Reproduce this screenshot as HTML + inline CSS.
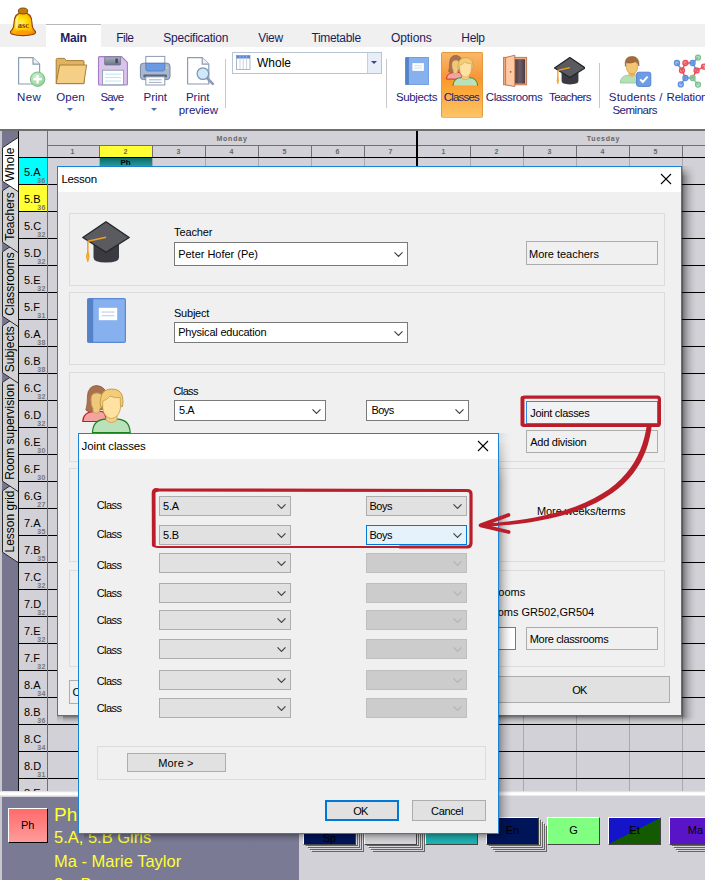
<!DOCTYPE html>
<html><head><meta charset="utf-8"><title>Joint classes</title>
<style>
html,body{margin:0;padding:0;}
body{width:705px;height:880px;overflow:hidden;position:relative;background:#fff;font-family:"Liberation Sans",sans-serif;font-size:11px;color:#000;}
.a{position:absolute;}
.t{position:absolute;white-space:nowrap;line-height:1;}
#tabbar{left:0;top:24px;width:705px;height:23px;background:#f0f0f0;}
#maintab{left:46px;top:24px;width:55px;height:23px;background:#fff;border-top:1px solid #b8b8b8;box-sizing:border-box;}
.rt{font-size:12px;color:#1e1e5a;top:31px;}
.rl{font-size:12px;color:#1e1e6e;text-align:center;line-height:13px;transform:translateX(-50%);}
.sep{width:1px;background:#c8c8c8;}
#grid{left:0;top:131px;width:705px;height:660px;background:#d1d1d7;overflow:hidden;}
.hl{position:absolute;left:19px;right:0;height:1px;background:#000;}
.vl{position:absolute;top:27px;width:1px;bottom:0;background:#a8a8ae;}
.cl{position:absolute;left:19px;width:28px;height:26px;font-size:11px;}
.cl b{position:absolute;left:5px;top:8.5px;font-weight:normal;line-height:1;}
.cl i{position:absolute;right:1px;bottom:0px;font-style:normal;font-size:7px;font-weight:bold;color:#777;line-height:1;letter-spacing:0.5px;}
.pn{position:absolute;top:17px;font-size:7px;font-weight:bold;color:#666;transform:translateX(-50%);line-height:1;}
.dlg{position:absolute;background:#f0f0f0;border:1px solid #1883d7;box-sizing:border-box;}
.ttl{position:absolute;left:0;top:0;right:0;background:#fff;}
.gb{position:absolute;border:1px solid #dcdcdc;box-sizing:border-box;}
.cb{position:absolute;background:#fff;border:1px solid #7a7a7a;box-sizing:border-box;}
.cb.g{background:#e1e1e1;border-color:#adadad;}
.cb.d{background:#cccccc;border-color:#bfbfbf;}
.cb span{position:absolute;left:4px;top:50%;transform:translateY(-50%);line-height:1;white-space:nowrap;}
.cb svg{position:absolute;right:4.5px;top:50%;margin-top:-2px;}
.bt{position:absolute;background:#e1e1e1;border:1px solid #adadad;box-sizing:border-box;}
.bt span{position:absolute;left:3px;top:50%;transform:translateY(-50%);line-height:1;white-space:nowrap;}
.bt.c span{left:50%;transform:translate(-50%,-50%);}
</style></head><body>
<div class="a" id="tabbar"></div><div class="a" id="maintab"></div>
<span class="t" style="left:60.2px;top:31.8px;font-size:12px;letter-spacing:-0.24px;color:#1c1c5c;font-weight:bold;">Main</span><span class="t" style="left:116.3px;top:31.8px;font-size:12px;letter-spacing:-0.55px;color:#1c1c5c;">File</span><span class="t" style="left:163.3px;top:31.8px;font-size:12px;letter-spacing:-0.25px;color:#1c1c5c;">Specification</span><span class="t" style="left:258.3px;top:31.8px;font-size:12px;letter-spacing:-0.34px;color:#1c1c5c;">View</span><span class="t" style="left:311.4px;top:31.8px;font-size:12px;letter-spacing:-0.32px;color:#1c1c5c;">Timetable</span><span class="t" style="left:391.0px;top:31.8px;font-size:12px;letter-spacing:-0.09px;color:#1c1c5c;">Options</span><span class="t" style="left:461.3px;top:31.8px;font-size:12px;letter-spacing:-0.31px;color:#1c1c5c;">Help</span><div class="a" style="left:441px;top:52px;width:42px;height:66px;background:linear-gradient(#f9b769,#f79434 41%,#fb9a28 42%,#fcc566);border:1px solid #e39a3c;border-bottom-color:#ffb833;box-sizing:border-box;border-radius:2px;"></div>
<span class="t" style="left:17.0px;top:91.5px;font-size:11.5px;letter-spacing:0.40px;color:#1c1c78;">New</span><span class="t" style="left:56.2px;top:91.5px;font-size:11.5px;letter-spacing:0.13px;color:#1c1c78;">Open</span><span class="t" style="left:100.4px;top:91.5px;font-size:11.5px;letter-spacing:-0.80px;color:#1c1c78;">Save</span><span class="t" style="left:143.5px;top:91.5px;font-size:11.5px;letter-spacing:-0.03px;color:#1c1c78;">Print</span><span class="t" style="left:186.0px;top:91.5px;font-size:11.5px;letter-spacing:-0.05px;color:#1c1c78;">Print</span><span class="t" style="left:178.8px;top:104.5px;font-size:11.5px;letter-spacing:-0.07px;color:#1c1c78;">preview</span><span class="t" style="left:395.9px;top:91.5px;font-size:11.5px;letter-spacing:-0.37px;color:#1c1c78;">Subjects</span><span class="t" style="left:443.7px;top:91.5px;font-size:11.5px;letter-spacing:-0.80px;color:#1c1c78;">Classes</span><span class="t" style="left:485.8px;top:91.5px;font-size:11.5px;letter-spacing:-0.43px;color:#1c1c78;">Classrooms</span><span class="t" style="left:549.1px;top:91.5px;font-size:11.5px;letter-spacing:-0.61px;color:#1c1c78;">Teachers</span><span class="t" style="left:608.8px;top:91.5px;font-size:11.5px;letter-spacing:0.20px;color:#1c1c78;">Students /</span><span class="t" style="left:612.4px;top:104.5px;font-size:11.5px;letter-spacing:-0.49px;color:#1c1c78;">Seminars</span><span class="t" style="left:666.5px;top:91.5px;font-size:11.5px;letter-spacing:-0.17px;color:#1c1c78;">Relations</span><div class="a" style="left:67px;top:108px;width:0;height:0;border-left:3px solid transparent;border-right:3px solid transparent;border-top:3px solid #4a6ab0;"></div>
<div class="a" style="left:109px;top:108px;width:0;height:0;border-left:3px solid transparent;border-right:3px solid transparent;border-top:3px solid #4a6ab0;"></div>
<div class="a" style="left:151px;top:108px;width:0;height:0;border-left:3px solid transparent;border-right:3px solid transparent;border-top:3px solid #4a6ab0;"></div>
<div class="a sep" style="left:225px;top:59px;height:49px;"></div>
<div class="a sep" style="left:386px;top:59px;height:49px;"></div>
<div class="a sep" style="left:599px;top:63px;height:45px;"></div>
<div class="a" style="left:232px;top:52px;width:150px;height:22px;border:1px solid #b8c4d4;box-sizing:border-box;background:#fff;"></div>
<div class="a" style="left:367px;top:53px;width:14px;height:20px;background:#e8eef8;border-left:1px solid #c8d0e0;box-sizing:border-box;"></div>
<div class="a" style="left:371px;top:61px;width:0;height:0;border-left:3px solid transparent;border-right:3px solid transparent;border-top:3px solid #33478a;"></div>
<span class="t" style="left:257px;top:56.5px;font-size:12px;color:#000;">Whole</span>
<svg class="a" style="left:0;top:0;" width="705" height="128" viewBox="0 0 705 128"><defs>
<radialGradient id="bg1" cx="0.42" cy="0.45" r="0.65"><stop offset="0" stop-color="#fff36a"/><stop offset="0.35" stop-color="#ffe000"/><stop offset="0.8" stop-color="#ffa800"/><stop offset="1" stop-color="#e88a00"/></radialGradient>
<radialGradient id="gp" cx="0.4" cy="0.35" r="0.7"><stop offset="0" stop-color="#d6efd6"/><stop offset="1" stop-color="#8ccf92"/></radialGradient>
<linearGradient id="sh" x1="0" y1="0" x2="0" y2="1"><stop offset="0" stop-color="#a8b0c0"/><stop offset="1" stop-color="#6c7688"/></linearGradient>
<linearGradient id="dk" x1="0" y1="0" x2="1" y2="0"><stop offset="0" stop-color="#4a3c44"/><stop offset="0.5" stop-color="#6e5c64"/><stop offset="1" stop-color="#4a3c44"/></linearGradient>
</defs><path d="M23 12.6 C15.6 12.6 14.1 18 14 23 C13.9 27.5 13.4 28.8 11.2 30.6 C9.8 31.9 10.2 33.4 12.4 34.2 C18 36.1 28 36.1 33.6 34.2 C35.8 33.4 36.2 31.9 34.8 30.6 C32.6 28.8 32.1 27.5 32 23 C31.9 18 30.4 12.6 23 12.6 Z" fill="url(#bg1)" stroke="#8e400a" stroke-width="1.1"/>
<path d="M16.6 16.5 C15.6 19 15.8 25 15.4 28.5 L17.4 28.8 C17.6 25 17.4 19.5 18.6 16 Z" fill="#fff" opacity="0.55"/>
<ellipse cx="23" cy="32.4" rx="7" ry="2.3" fill="#ff9408" opacity="0.8"/>
<ellipse cx="23" cy="11" rx="4.7" ry="3" fill="#c27c0c" stroke="#7e420a" stroke-width="0.9"/>
<text x="23.4" y="28.4" text-anchor="middle" font-family="Liberation Serif, serif" font-size="8.5" font-weight="bold" fill="#82400c">asc</text><path d="M18.6 57.6 L33 57.6 L39.6 64.2 L39.6 84 L18.6 84 Z" fill="#fff" stroke="#8c9cb4" stroke-width="1.2" stroke-linejoin="round"/>
<path d="M33 57.6 L33 64.2 L39.6 64.2" fill="#eef2f8" stroke="#8c9cb4" stroke-width="1.2" stroke-linejoin="round"/>
<circle cx="37.6" cy="79.2" r="7.2" fill="url(#gp)" stroke="#7cbc84" stroke-width="1"/>
<path d="M37.6 75 L37.6 83.4 M33.4 79.2 L41.8 79.2" stroke="#fff" stroke-width="2.2"/><path d="M56.2 83.6 L56.2 59.6 Q56.2 58.4 57.4 58.4 L64.6 58.4 L66.4 60.6 L83 60.6 Q84 60.6 84 61.8 L84 83.6 Z" fill="#e0b362" stroke="#a87e36" stroke-width="1"/>
<path d="M59.6 65 L86.6 65 L83.8 83.6 L56.2 83.6 Z" fill="#f6cf86" stroke="#a87e36" stroke-width="1" stroke-linejoin="round"/><path d="M98.5 57.6 Q98.5 56.6 99.5 56.6 L121.6 56.6 L127.4 62.4 L127.4 84 Q127.4 85 126.4 85 L99.5 85 Q98.5 85 98.5 84 Z" fill="#d9c4ec" stroke="#a47cc6" stroke-width="1.1"/>
<rect x="104.6" y="56.8" width="16" height="8.2" rx="1" fill="url(#sh)" stroke="#6a7488" stroke-width="0.7"/>
<rect x="115.4" y="58.6" width="2.4" height="4.6" fill="#3c4658"/>
<rect x="102.6" y="70.2" width="21" height="14.6" fill="#fff" stroke="#8a9ab4" stroke-width="0.9"/>
<path d="M105 74.2 L121.2 74.2 M105 77.6 L121.2 77.6 M105 81 L121.2 81" stroke="#bfe3f4" stroke-width="1"/><rect x="145.8" y="56.4" width="19" height="8" fill="#fff" stroke="#8a9ab4" stroke-width="1"/>
<rect x="140.4" y="63.2" width="29.6" height="16.4" rx="3" fill="#a9b6cb" stroke="#7686a6" stroke-width="1"/>
<path d="M145.8 63.4 L164.8 63.4 L164.8 69 Q164.8 71 162.8 71 L147.8 71 Q145.8 71 145.8 69 Z" fill="#6a9ae4" stroke="#4c7cc8" stroke-width="0.8"/>
<rect x="166" y="66.8" width="1.6" height="1.6" fill="#ffd84a"/>
<rect x="143.4" y="74.4" width="23.6" height="3" rx="1" fill="#56667e"/>
<rect x="145.8" y="76.8" width="19" height="8.2" fill="#fff" stroke="#8a9ab4" stroke-width="1"/>
<path d="M149 79.8 L161.6 79.8 M149 82.4 L161.6 82.4" stroke="#a4aec0" stroke-width="1"/><path d="M187.6 57.6 L202.2 57.6 L208.8 64.2 L208.8 84 L187.6 84 Z" fill="#fff" stroke="#8c9cb4" stroke-width="1.2" stroke-linejoin="round"/>
<path d="M202.2 57.6 L202.2 64.2 L208.8 64.2" fill="#eef2f8" stroke="#8c9cb4" stroke-width="1.2" stroke-linejoin="round"/>
<path d="M207 78 L212.8 83.8" stroke="#8a9ab8" stroke-width="2.6" stroke-linecap="round"/>
<circle cx="202.9" cy="73.6" r="5.8" fill="#cfe8fa" stroke="#7c94b6" stroke-width="1.2"/><rect x="236.5" y="55.5" width="13.5" height="14" fill="#fff" stroke="#9aa6b8" stroke-width="0.8"/>
<rect x="236.5" y="55.5" width="13.5" height="3" fill="#5a86d4"/>
<path d="M240 58.5 L240 69.5 M243.2 58.5 L243.2 69.5 M246.6 58.5 L246.6 69.5" stroke="#b8c0cc" stroke-width="0.7"/>
<path d="M240 55.5 L240 58.5 M243.2 55.5 L243.2 58.5 M246.6 55.5 L246.6 58.5" stroke="#bcd0f0" stroke-width="0.6"/><rect x="503.6" y="57.4" width="23" height="27.4" fill="#f3ad86" stroke="#bf7a52" stroke-width="1"/>
<rect x="514.8" y="59.2" width="10.2" height="24.4" fill="url(#dk)"/>
<path d="M505.6 57.6 L514.8 55.2 L514.8 86.6 L505.6 84.8 Z" fill="#ffc9a4" stroke="#bf7a52" stroke-width="1" stroke-linejoin="round"/>
<circle cx="510.6" cy="71.8" r="0.9" fill="#a05c38"/><path d="M620.2 83 Q620.6 75.6 628 75.2 L636 75.2 Q643 75.6 644 83 Z" fill="#b4e0b6" stroke="#8cc892" stroke-width="0.8"/>
<path d="M628.6 72 L628.6 75.6 Q632 78.4 635.4 75.6 L635.4 72 Z" fill="#e8b868"/>
<ellipse cx="632" cy="67.2" rx="5.6" ry="6.8" fill="#f4c674" stroke="#c89848" stroke-width="0.7"/>
<path d="M625.4 66.4 Q623.8 57 631.4 56.4 Q639.6 56 639 66 Q637.6 62.6 635.6 61.6 Q630 64 626.6 62.6 Q625.6 64 625.4 66.4 Z" fill="#a46c3a" stroke="#845228" stroke-width="0.6"/>
<rect x="636.6" y="72.2" width="14.2" height="14.2" rx="2" fill="#6c9ce6" stroke="#4c7cd0" stroke-width="0.9"/>
<path d="M640.2 79.4 L642.8 82 L647.6 76.6" fill="none" stroke="#fff" stroke-width="2"/><path d="M677 63 L682 70.4" stroke="#5a8ee0" stroke-width="1.4"/><path d="M685.4 63 L692.6 63" stroke="#e8505a" stroke-width="1.4"/><path d="M685.4 63 L682 70.4" stroke="#e8505a" stroke-width="1.4"/><path d="M692.6 63 L696.6 70.4" stroke="#5a8ee0" stroke-width="1.4"/><path d="M692.6 63 L698 57.6" stroke="#5a8ee0" stroke-width="1.4"/><path d="M696.6 70.4 L704 66.6" stroke="#e8505a" stroke-width="1.4"/><path d="M682 70.4 L685.4 78" stroke="#e8505a" stroke-width="1.4"/><path d="M696.6 70.4 L692.6 78" stroke="#e8505a" stroke-width="1.4"/><path d="M685.4 78 L692.6 78" stroke="#5a8ee0" stroke-width="1.4"/><path d="M685.4 78 L680.8 84.4" stroke="#5a8ee0" stroke-width="1.4"/><path d="M692.6 78 L698 84.6" stroke="#7cc48c" stroke-width="1.4"/><circle cx="677" cy="63" r="2.5" fill="#5a8ee0" fill-opacity="0.55" stroke="#5a8ee0" stroke-width="1.3"/><circle cx="685.4" cy="63" r="2.5" fill="#e8505a" fill-opacity="0.55" stroke="#e8505a" stroke-width="1.3"/><circle cx="692.6" cy="63" r="2.5" fill="#5a8ee0" fill-opacity="0.55" stroke="#5a8ee0" stroke-width="1.3"/><circle cx="698" cy="57.6" r="2.5" fill="#7cc48c" fill-opacity="0.55" stroke="#7cc48c" stroke-width="1.3"/><circle cx="682" cy="70.4" r="2.5" fill="#e8505a" fill-opacity="0.55" stroke="#e8505a" stroke-width="1.3"/><circle cx="696.6" cy="70.4" r="2.5" fill="#e8505a" fill-opacity="0.55" stroke="#e8505a" stroke-width="1.3"/><circle cx="704" cy="66.6" r="2.5" fill="#e8505a" fill-opacity="0.55" stroke="#e8505a" stroke-width="1.3"/><circle cx="685.4" cy="78" r="2.5" fill="#5a8ee0" fill-opacity="0.55" stroke="#5a8ee0" stroke-width="1.3"/><circle cx="692.6" cy="78" r="2.5" fill="#7cc48c" fill-opacity="0.55" stroke="#7cc48c" stroke-width="1.3"/><circle cx="680.8" cy="84.4" r="2.5" fill="#5a8ee0" fill-opacity="0.55" stroke="#5a8ee0" stroke-width="1.3"/><circle cx="698" cy="84.6" r="2.5" fill="#7cc48c" fill-opacity="0.55" stroke="#7cc48c" stroke-width="1.3"/></svg>
<svg class="a" style="left:405px;top:56.6px;" width="24.4" height="28.1" viewBox="0 0 39 45"><rect x="0.6" y="0.6" width="37.8" height="43.8" rx="1.5" fill="#86b0ee" stroke="#5a88d2" stroke-width="1.2"/>
<rect x="0.6" y="0.6" width="5.6" height="43.8" fill="#5482c8"/>
<rect x="11.8" y="9.8" width="18.4" height="12.4" fill="#fff"/>
<rect x="14.5" y="13.4" width="13" height="1.3" fill="#c4d6f0"/><rect x="14.5" y="17" width="13" height="1.3" fill="#c4d6f0"/></svg><svg class="a" style="left:446px;top:54.8px;" width="32.3" height="31.7" viewBox="0 0 49 48"><path d="M0.8 36.5 Q1 27 12 26.5 L20 26.5 Q24 28 24 36.5 Z" fill="#f4a2a2" stroke="#c41c1c" stroke-width="1.2"/>
<path d="M14.5 0.5 Q6 1 5.5 11 Q5.5 20 3.8 25 Q7 28.5 12 26 L22 24 L24 6 Q20 0.5 14.5 0.5 Z" fill="#a9714f" stroke="#8a5a3c" stroke-width="0.8"/>
<path d="M9 14 Q9 8 15 8 Q21 8 21 15 Q21 22 17.5 24 L17.5 27 Q14 29.5 11 27 L11 23.5 Q9 21 9 14 Z" fill="#f0c87c" stroke="#c89a50" stroke-width="0.8"/>
<path d="M10.5 47.5 Q11 34.5 24 34.2 L35 34.2 Q47.5 34.5 48.2 47.5 Z" fill="#b9e2ba" stroke="#17821a" stroke-width="1.2"/>
<path d="M24 30 L24 35 Q29.5 40 35 35 L35 30 Z" fill="#f6d088" stroke="#c89a50" stroke-width="0.8"/>
<path d="M29.5 4 Q20 4 18.8 13 Q17.5 17 18.5 21.5 Q20 23 21 20 L38.5 20 Q39.5 23 40.5 21.5 Q41.5 17 40.5 12 Q39 4 29.5 4 Z" fill="#f2cc78" stroke="#c0963c" stroke-width="0.9"/>
<path d="M20.8 16 Q25 15 28 11 Q33 13.5 38.2 12.5 L38.5 22 Q38 30 32 33 Q29.5 34 27 33 Q21 30 20.7 22 Z" fill="#ffe2a2" stroke="#c89a50" stroke-width="0.8"/></svg><svg class="a" style="left:553.8px;top:57px;" width="31.7" height="28.4" viewBox="0 0 48 43"><path d="M11.5 24 L11.5 36.5 Q11.5 41.5 24 41.5 Q37 41.5 37 36.5 L37 24 Z" fill="#3a3a40"/>
<path d="M24 0.8 L47.2 16.5 L24 31.2 L0.8 16.5 Z" fill="#5a5a5f" stroke="#1e262c" stroke-width="1.8" stroke-linejoin="round"/>
<path d="M24 16.2 L5.8 20.2 L5.8 32" fill="none" stroke="#f0a020" stroke-width="2.0" stroke-linejoin="round"/>
<path d="M5.8 30.5 Q8.6 35 5.8 40.8 Q3 35 5.8 30.5 Z" fill="#f6b440" stroke="#e89818" stroke-width="0.8"/></svg><div class="a" style="left:0;top:129px;width:705px;height:2px;background:#6e6e6e;"></div>
<div class="a" id="grid">
<div class="a" style="left:0;top:0;width:2px;height:662px;background:#c8c8cc;"></div><div class="a" style="left:2px;top:0;width:16px;height:662px;background:#76768e;"></div><div class="a" style="left:18px;top:0;width:1px;height:662px;background:#111;"></div><svg class="a" style="left:0;top:0;" width="20" height="660" viewBox="0 131 20 660"><path d="M18 480.5 L2.5 490.8 L2.5 552.2 L18 562.5" fill="#d3d3d6" stroke="#2a2a2a" stroke-width="1"/><text x="0" y="0" transform="translate(14.3 521.5) rotate(-90)" text-anchor="middle" font-family="Liberation Sans, sans-serif" font-size="12" fill="#000">Lesson grid</text><path d="M18 372.0 L2.5 382.3 L2.5 481.2 L18 491.5" fill="#d3d3d6" stroke="#2a2a2a" stroke-width="1"/><text x="0" y="0" transform="translate(14.3 431.75) rotate(-90)" text-anchor="middle" font-family="Liberation Sans, sans-serif" font-size="12" fill="#000">Room supervision</text><path d="M18 315.5 L2.5 325.8 L2.5 372.7 L18 383.0" fill="#d3d3d6" stroke="#2a2a2a" stroke-width="1"/><text x="0" y="0" transform="translate(14.3 349.25) rotate(-90)" text-anchor="middle" font-family="Liberation Sans, sans-serif" font-size="12" fill="#000">Subjects</text><path d="M18 241.5 L2.5 251.8 L2.5 316.2 L18 326.5" fill="#d3d3d6" stroke="#2a2a2a" stroke-width="1"/><text x="0" y="0" transform="translate(14.3 284.0) rotate(-90)" text-anchor="middle" font-family="Liberation Sans, sans-serif" font-size="12" fill="#000">Classrooms</text><path d="M18 180.5 L2.5 190.8 L2.5 242.2 L18 252.5" fill="#d3d3d6" stroke="#2a2a2a" stroke-width="1"/><text x="0" y="0" transform="translate(14.3 216.5) rotate(-90)" text-anchor="middle" font-family="Liberation Sans, sans-serif" font-size="12" fill="#000">Teachers</text><path d="M18 137.5 L2.5 147.8 L2.5 181.2 L18 191.5" fill="#fff" stroke="#2a2a2a" stroke-width="1"/><text x="0" y="0" transform="translate(14.3 164.5) rotate(-90)" text-anchor="middle" font-family="Liberation Sans, sans-serif" font-size="12" fill="#000">Whole</text></svg><div class="a" style="left:47px;top:0;width:1px;height:27px;background:#707070;"></div><div class="a" style="left:48px;top:14px;width:657px;height:1px;background:#707070;"></div><div class="vl" style="left:99px;"></div><div class="a" style="left:99px;top:15px;width:1px;height:11px;background:#707070;"></div><div class="vl" style="left:152px;"></div><div class="a" style="left:152px;top:15px;width:1px;height:11px;background:#707070;"></div><div class="vl" style="left:205px;"></div><div class="a" style="left:205px;top:15px;width:1px;height:11px;background:#707070;"></div><div class="vl" style="left:258px;"></div><div class="a" style="left:258px;top:15px;width:1px;height:11px;background:#707070;"></div><div class="vl" style="left:311px;"></div><div class="a" style="left:311px;top:15px;width:1px;height:11px;background:#707070;"></div><div class="vl" style="left:364px;"></div><div class="a" style="left:364px;top:15px;width:1px;height:11px;background:#707070;"></div><div class="a" style="left:416px;top:0;width:2px;height:662px;background:#000;"></div><div class="vl" style="left:470px;"></div><div class="a" style="left:470px;top:15px;width:1px;height:11px;background:#707070;"></div><div class="vl" style="left:523px;"></div><div class="a" style="left:523px;top:15px;width:1px;height:11px;background:#707070;"></div><div class="vl" style="left:576px;"></div><div class="a" style="left:576px;top:15px;width:1px;height:11px;background:#707070;"></div><div class="vl" style="left:629px;"></div><div class="a" style="left:629px;top:15px;width:1px;height:11px;background:#707070;"></div><div class="vl" style="left:682px;"></div><div class="a" style="left:682px;top:15px;width:1px;height:11px;background:#707070;"></div><div class="a" style="left:100px;top:15px;width:52px;height:11px;background:#ffff33;"></div><div class="a" style="left:100px;top:27px;width:52px;height:9px;background:linear-gradient(#0a6a6a,#2aa0a0);"></div><span class="pn" style="left:125.5px;top:28px;color:#000;font-size:8px;">Ph</span><span class="pn" style="left:72.5px;">1</span><span class="pn" style="left:125.5px;">2</span><span class="pn" style="left:178.5px;">3</span><span class="pn" style="left:231.5px;">4</span><span class="pn" style="left:284.5px;">5</span><span class="pn" style="left:337.5px;">6</span><span class="pn" style="left:390.5px;">7</span><span class="pn" style="left:443.5px;">1</span><span class="pn" style="left:496.5px;">2</span><span class="pn" style="left:549.5px;">3</span><span class="pn" style="left:602.5px;">4</span><span class="pn" style="left:655.5px;">5</span><span class="pn" style="left:232px;top:4px;letter-spacing:0.8px;">Monday</span><span class="pn" style="left:603.5px;top:4px;letter-spacing:0.8px;">Tuesday</span><div class="hl" style="top:26px;"></div><div class="cl" style="top:27px;background:#00ffff;"><b>5.A</b><i>36</i></div><div class="hl" style="top:53px;"></div><div class="cl" style="top:54px;background:#ffff33;"><b>5.B</b><i>36</i></div><div class="hl" style="top:80px;"></div><div class="cl" style="top:81px;"><b>5.C</b><i>32</i></div><div class="hl" style="top:107px;"></div><div class="cl" style="top:108px;"><b>5.D</b><i>32</i></div><div class="hl" style="top:134px;"></div><div class="cl" style="top:135px;"><b>5.E</b><i>32</i></div><div class="hl" style="top:161px;"></div><div class="cl" style="top:162px;"><b>5.F</b><i>31</i></div><div class="hl" style="top:188px;"></div><div class="cl" style="top:189px;"><b>6.A</b><i>38</i></div><div class="hl" style="top:215px;"></div><div class="cl" style="top:216px;"><b>6.B</b><i>38</i></div><div class="hl" style="top:242px;"></div><div class="cl" style="top:243px;"><b>6.C</b><i>32</i></div><div class="hl" style="top:269px;"></div><div class="cl" style="top:270px;"><b>6.D</b><i>32</i></div><div class="hl" style="top:296px;"></div><div class="cl" style="top:297px;"><b>6.E</b><i>30</i></div><div class="hl" style="top:323px;"></div><div class="cl" style="top:324px;"><b>6.F</b><i>30</i></div><div class="hl" style="top:350px;"></div><div class="cl" style="top:351px;"><b>6.G</b><i>27</i></div><div class="hl" style="top:377px;"></div><div class="cl" style="top:378px;"><b>7.A</b><i>35</i></div><div class="hl" style="top:404px;"></div><div class="cl" style="top:405px;"><b>7.B</b><i>35</i></div><div class="hl" style="top:431px;"></div><div class="cl" style="top:432px;"><b>7.C</b><i>32</i></div><div class="hl" style="top:458px;"></div><div class="cl" style="top:459px;"><b>7.D</b><i>32</i></div><div class="hl" style="top:485px;"></div><div class="cl" style="top:486px;"><b>7.E</b><i>32</i></div><div class="hl" style="top:512px;"></div><div class="cl" style="top:513px;"><b>7.F</b><i>32</i></div><div class="hl" style="top:539px;"></div><div class="cl" style="top:540px;"><b>8.A</b><i>34</i></div><div class="hl" style="top:566px;"></div><div class="cl" style="top:567px;"><b>8.B</b><i>36</i></div><div class="hl" style="top:593px;"></div><div class="cl" style="top:594px;"><b>8.C</b><i>34</i></div><div class="hl" style="top:620px;"></div><div class="cl" style="top:621px;"><b>8.D</b><i>31</i></div><div class="hl" style="top:647px;"></div><div class="cl" style="top:648px;"><b>8.E</b><i>30</i></div><div class="hl" style="top:674px;"></div><div class="a" style="left:47px;top:27px;width:1px;height:640px;background:#707070;"></div></div>
<div class="a" style="left:0;top:791px;width:705px;height:6px;background:linear-gradient(#d8d8dc,#fff 30%,#fff 60%,#c8c8cc);"></div><div class="a" style="left:0;top:797px;width:705px;height:83px;background:#d1d1d7;"></div><div class="a" style="left:0;top:797px;width:299px;height:83px;background:#7a7a94;"></div><div class="a" style="left:0;top:797px;width:2px;height:83px;background:#c8c8cc;"></div><div class="a" style="left:8px;top:808px;width:40px;height:35px;background:linear-gradient(#ff6a6a,#ff9c9c);border:1px solid #000;border-top-color:#fff;border-left-color:#fff;box-sizing:border-box;"></div><span class="t" style="left:21px;top:820px;font-size:11px;">Ph</span><span class="t" style="left:54px;top:805px;font-size:19px;color:#ffff33;">Ph</span><span class="t" style="left:54px;top:829px;font-size:16.5px;color:#ffff33;">5.A, 5.B Girls</span><span class="t" style="left:54px;top:853px;font-size:16.5px;color:#ffff33;">Ma - Marie Taylor</span><span class="t" style="left:54px;top:876px;font-size:16.5px;color:#ffff33;">2 x Bm</span><div class="a" style="left:311px;top:825px;width:53px;height:27px;background:#d4d4d8;border:1px solid #666;border-top-color:#fff;border-left-color:#fff;box-sizing:border-box;"></div><div class="a" style="left:309px;top:823px;width:53px;height:27px;background:#d4d4d8;border:1px solid #666;border-top-color:#fff;border-left-color:#fff;box-sizing:border-box;"></div><div class="a" style="left:307px;top:821px;width:53px;height:27px;background:#d4d4d8;border:1px solid #666;border-top-color:#fff;border-left-color:#fff;box-sizing:border-box;"></div><div class="a" style="left:305px;top:819px;width:53px;height:27px;background:#d4d4d8;border:1px solid #666;border-top-color:#fff;border-left-color:#fff;box-sizing:border-box;"></div><div class="a" style="left:303px;top:817px;width:53px;height:28px;background:#00145a;border:1px solid #444;border-top-color:#fff;border-left-color:#fff;box-sizing:border-box;"></div><span class="t" style="left:329.5px;top:833px;transform:translateX(-50%);font-size:11px;color:#000;">Sp</span><div class="a" style="left:372px;top:825px;width:53px;height:27px;background:#d4d4d8;border:1px solid #666;border-top-color:#fff;border-left-color:#fff;box-sizing:border-box;"></div><div class="a" style="left:370px;top:823px;width:53px;height:27px;background:#d4d4d8;border:1px solid #666;border-top-color:#fff;border-left-color:#fff;box-sizing:border-box;"></div><div class="a" style="left:368px;top:821px;width:53px;height:27px;background:#d4d4d8;border:1px solid #666;border-top-color:#fff;border-left-color:#fff;box-sizing:border-box;"></div><div class="a" style="left:366px;top:819px;width:53px;height:27px;background:#d4d4d8;border:1px solid #666;border-top-color:#fff;border-left-color:#fff;box-sizing:border-box;"></div><div class="a" style="left:364px;top:817px;width:53px;height:28px;background:#d4d4d8;border:1px solid #444;border-top-color:#fff;border-left-color:#fff;box-sizing:border-box;"></div><span class="t" style="left:390.5px;top:825px;transform:translateX(-50%);font-size:11px;color:#000;"></span><div class="a" style="left:425px;top:817px;width:53px;height:28px;background:#20b0b0;border:1px solid #444;border-top-color:#fff;border-left-color:#fff;box-sizing:border-box;"></div><span class="t" style="left:451.5px;top:821px;transform:translateX(-50%);font-size:11px;color:#000;">...</span><div class="a" style="left:494px;top:825px;width:53px;height:27px;background:#d4d4d8;border:1px solid #666;border-top-color:#fff;border-left-color:#fff;box-sizing:border-box;"></div><div class="a" style="left:492px;top:823px;width:53px;height:27px;background:#d4d4d8;border:1px solid #666;border-top-color:#fff;border-left-color:#fff;box-sizing:border-box;"></div><div class="a" style="left:490px;top:821px;width:53px;height:27px;background:#d4d4d8;border:1px solid #666;border-top-color:#fff;border-left-color:#fff;box-sizing:border-box;"></div><div class="a" style="left:488px;top:819px;width:53px;height:27px;background:#d4d4d8;border:1px solid #666;border-top-color:#fff;border-left-color:#fff;box-sizing:border-box;"></div><div class="a" style="left:486px;top:817px;width:53px;height:28px;background:#00145a;border:1px solid #444;border-top-color:#fff;border-left-color:#fff;box-sizing:border-box;"></div><span class="t" style="left:512.5px;top:825px;transform:translateX(-50%);font-size:11px;color:#000;">En</span><div class="a" style="left:547px;top:817px;width:53px;height:28px;background:#80ff80;border:1px solid #444;border-top-color:#fff;border-left-color:#fff;box-sizing:border-box;"></div><span class="t" style="left:573.5px;top:825px;transform:translateX(-50%);font-size:11px;color:#000;">G</span><div class="a" style="left:608px;top:817px;width:53px;height:28px;background:linear-gradient(to bottom right,#1414c8 49.5%,#145a00 50.5%);border:1px solid #444;border-top-color:#fff;border-left-color:#fff;box-sizing:border-box;"></div><span class="t" style="left:634.5px;top:825px;transform:translateX(-50%);font-size:11px;color:#000;">Et</span><div class="a" style="left:677px;top:825px;width:53px;height:27px;background:#d4d4d8;border:1px solid #666;border-top-color:#fff;border-left-color:#fff;box-sizing:border-box;"></div><div class="a" style="left:675px;top:823px;width:53px;height:27px;background:#d4d4d8;border:1px solid #666;border-top-color:#fff;border-left-color:#fff;box-sizing:border-box;"></div><div class="a" style="left:673px;top:821px;width:53px;height:27px;background:#d4d4d8;border:1px solid #666;border-top-color:#fff;border-left-color:#fff;box-sizing:border-box;"></div><div class="a" style="left:671px;top:819px;width:53px;height:27px;background:#d4d4d8;border:1px solid #666;border-top-color:#fff;border-left-color:#fff;box-sizing:border-box;"></div><div class="a" style="left:669px;top:817px;width:53px;height:28px;background:#5a14c8;border:1px solid #444;border-top-color:#fff;border-left-color:#fff;box-sizing:border-box;"></div><span class="t" style="left:695.5px;top:825px;transform:translateX(-50%);font-size:11px;color:#000;">Ma</span>
<div class="a" style="left:682px;top:169px;width:14px;height:547px;background:linear-gradient(to right,rgba(0,0,0,0.5) 0,rgba(0,0,0,0.300) 22%,rgba(0,0,0,0.150) 48%,rgba(0,0,0,0.050) 75%,rgba(0,0,0,0) 100%);-webkit-mask-image:linear-gradient(to bottom,rgba(0,0,0,0.35) 0,#000 8px);mask-image:linear-gradient(to bottom,rgba(0,0,0,0.35) 0,#000 8px);"></div><div class="a" style="left:682px;top:166px;width:14px;height:3px;background:linear-gradient(to right,rgba(0,0,0,0.5) 0,rgba(0,0,0,0.300) 22%,rgba(0,0,0,0.150) 48%,rgba(0,0,0,0.050) 75%,rgba(0,0,0,0) 100%);opacity:0.25;"></div><div class="a" style="left:63px;top:716px;width:619px;height:8px;background:linear-gradient(to bottom,rgba(0,0,0,0.5) 0,rgba(0,0,0,0.300) 22%,rgba(0,0,0,0.150) 48%,rgba(0,0,0,0.050) 75%,rgba(0,0,0,0) 100%);"></div><div class="a" style="left:57px;top:716px;width:6px;height:8px;background:linear-gradient(to bottom,rgba(0,0,0,0.5) 0,rgba(0,0,0,0.300) 22%,rgba(0,0,0,0.150) 48%,rgba(0,0,0,0.050) 75%,rgba(0,0,0,0) 100%);opacity:0.5;"></div><div class="a" style="left:682px;top:716px;width:14px;height:8px;background:radial-gradient(ellipse 14px 8px at 0 0,rgba(0,0,0,0.5) 0,rgba(0,0,0,0.300) 22%,rgba(0,0,0,0.150) 48%,rgba(0,0,0,0.050) 75%,rgba(0,0,0,0) 100%);"></div>
<div class="dlg" style="left:57px;top:166px;width:625px;height:550px;"><div class="ttl" style="height:25px;"></div></div>
<span class="t" style="left:61.4px;top:173.9px;font-size:11.5px;letter-spacing:-0.29px;color:#000;">Lesson</span><svg class="a" style="left:660px;top:173px;" width="12" height="12" viewBox="0 0 12 12"><path d="M1 1 L11 11 M11 1 L1 11" stroke="#000" stroke-width="1.1" fill="none"/></svg><div class="gb" style="left:69px;top:213px;width:596px;height:73px;"></div><div class="gb" style="left:69px;top:292px;width:596px;height:73px;"></div><div class="gb" style="left:69px;top:372px;width:596px;height:90px;"></div><div class="gb" style="left:69px;top:468px;width:596px;height:94px;"></div><div class="gb" style="left:69px;top:570px;width:596px;height:97px;"></div><span class="t" style="left:174.1px;top:227.2px;font-size:11px;letter-spacing:-0.13px;color:#000;">Teacher</span><div class="cb " style="left:174px;top:242px;width:234px;height:24px;"><svg width="9" height="5" viewBox="0 0 9 5"><path d="M0.5 0.4 L4.5 4.4 L8.5 0.4" fill="none" stroke="#444" stroke-width="1.2"/></svg></div><span class="t" style="left:178.2px;top:248.7px;font-size:11px;letter-spacing:-0.02px;color:#000;">Peter Hofer (Pe)</span><div class="bt " style="left:526px;top:241px;width:132px;height:24px;background:#f0f0f0;"></div><span class="t" style="left:529.0px;top:249.0px;font-size:11px;letter-spacing:-0.03px;color:#000;">More teachers</span><span class="t" style="left:174.0px;top:307.9px;font-size:11px;letter-spacing:-0.23px;color:#000;">Subject</span><div class="cb " style="left:174px;top:322px;width:234px;height:21px;"><svg width="9" height="5" viewBox="0 0 9 5"><path d="M0.5 0.4 L4.5 4.4 L8.5 0.4" fill="none" stroke="#444" stroke-width="1.2"/></svg></div><span class="t" style="left:178.2px;top:327.3px;font-size:11px;letter-spacing:-0.20px;color:#000;">Physical education</span><span class="t" style="left:173.6px;top:386.0px;font-size:11px;letter-spacing:-0.67px;color:#000;">Class</span><div class="cb " style="left:174px;top:400px;width:152px;height:21px;"><svg width="9" height="5" viewBox="0 0 9 5"><path d="M0.5 0.4 L4.5 4.4 L8.5 0.4" fill="none" stroke="#444" stroke-width="1.2"/></svg></div><span class="t" style="left:179.1px;top:405.4px;font-size:11px;letter-spacing:-0.48px;color:#000;">5.A</span><div class="cb " style="left:366px;top:400px;width:103px;height:21px;"><svg width="9" height="5" viewBox="0 0 9 5"><path d="M0.5 0.4 L4.5 4.4 L8.5 0.4" fill="none" stroke="#444" stroke-width="1.2"/></svg></div><span class="t" style="left:371.5px;top:405.4px;font-size:11px;letter-spacing:-0.59px;color:#000;">Boys</span><div class="bt " style="left:526px;top:401px;width:132px;height:23px;border:1px solid #2b8ce6;background:#f1f2f3;"></div><span class="t" style="left:530.3px;top:407.5px;font-size:11px;letter-spacing:-0.30px;color:#000;">Joint classes</span><div class="bt " style="left:526px;top:430px;width:132px;height:23px;background:#f0f0f0;"></div><span class="t" style="left:530.3px;top:437.0px;font-size:11px;letter-spacing:-0.27px;color:#000;">Add division</span><span class="t" style="left:537.0px;top:505.9px;font-size:11px;letter-spacing:-0.09px;color:#000;">More weeks/terms</span><span class="t" style="left:467.2px;top:587.2px;font-size:11px;letter-spacing:0.00px;color:#000;">Classrooms</span><span class="t" style="left:430.4px;top:607.1px;font-size:11px;letter-spacing:0.00px;color:#000;">Home classrooms GR502,GR504</span><div class="cb" style="left:380px;top:627px;width:136px;height:23px;"></div><div class="bt " style="left:526px;top:627px;width:132px;height:23px;background:#f0f0f0;"></div><span class="t" style="left:529.8px;top:633.6px;font-size:11px;letter-spacing:-0.35px;color:#000;">More classrooms</span><svg class="a" style="left:82px;top:221px;" width="48.0" height="43.0" viewBox="0 0 48 43"><path d="M11.5 24 L11.5 36.5 Q11.5 41.5 24 41.5 Q37 41.5 37 36.5 L37 24 Z" fill="#3a3a40"/>
<path d="M24 0.8 L47.2 16.5 L24 31.2 L0.8 16.5 Z" fill="#5a5a5f" stroke="#1e262c" stroke-width="1.3" stroke-linejoin="round"/>
<path d="M24 16.2 L5.8 20.2 L5.8 32" fill="none" stroke="#f0a020" stroke-width="1.5" stroke-linejoin="round"/>
<path d="M5.8 30.5 Q8.6 35 5.8 40.8 Q3 35 5.8 30.5 Z" fill="#f6b440" stroke="#e89818" stroke-width="0.8"/></svg><svg class="a" style="left:87px;top:298px;" width="39.0" height="45.0" viewBox="0 0 39 45"><rect x="0.6" y="0.6" width="37.8" height="43.8" rx="1.5" fill="#86b0ee" stroke="#5a88d2" stroke-width="1.2"/>
<rect x="0.6" y="0.6" width="5.6" height="43.8" fill="#5482c8"/>
<rect x="11.8" y="9.8" width="18.4" height="12.4" fill="#fff"/>
<rect x="14.5" y="13.4" width="13" height="1.3" fill="#c4d6f0"/><rect x="14.5" y="17" width="13" height="1.3" fill="#c4d6f0"/></svg><svg class="a" style="left:82px;top:385px;" width="49.0" height="48.0" viewBox="0 0 49 48"><path d="M0.8 36.5 Q1 27 12 26.5 L20 26.5 Q24 28 24 36.5 Z" fill="#f4a2a2" stroke="#c41c1c" stroke-width="1.2"/>
<path d="M14.5 0.5 Q6 1 5.5 11 Q5.5 20 3.8 25 Q7 28.5 12 26 L22 24 L24 6 Q20 0.5 14.5 0.5 Z" fill="#a9714f" stroke="#8a5a3c" stroke-width="0.8"/>
<path d="M9 14 Q9 8 15 8 Q21 8 21 15 Q21 22 17.5 24 L17.5 27 Q14 29.5 11 27 L11 23.5 Q9 21 9 14 Z" fill="#f0c87c" stroke="#c89a50" stroke-width="0.8"/>
<path d="M10.5 47.5 Q11 34.5 24 34.2 L35 34.2 Q47.5 34.5 48.2 47.5 Z" fill="#b9e2ba" stroke="#17821a" stroke-width="1.2"/>
<path d="M24 30 L24 35 Q29.5 40 35 35 L35 30 Z" fill="#f6d088" stroke="#c89a50" stroke-width="0.8"/>
<path d="M29.5 4 Q20 4 18.8 13 Q17.5 17 18.5 21.5 Q20 23 21 20 L38.5 20 Q39.5 23 40.5 21.5 Q41.5 17 40.5 12 Q39 4 29.5 4 Z" fill="#f2cc78" stroke="#c0963c" stroke-width="0.9"/>
<path d="M20.8 16 Q25 15 28 11 Q33 13.5 38.2 12.5 L38.5 22 Q38 30 32 33 Q29.5 34 27 33 Q21 30 20.7 22 Z" fill="#ffe2a2" stroke="#c89a50" stroke-width="0.8"/></svg><div class="bt " style="left:69px;top:680px;width:300px;height:24px;background:#f0f0f0;"></div><span class="t" style="left:72.4px;top:686.7px;font-size:11px;letter-spacing:-0.50px;color:#000;">Cancel</span><div class="bt " style="left:490px;top:676px;width:180px;height:27px;"></div><span class="t" style="left:572.2px;top:684.8px;font-size:11px;letter-spacing:-0.80px;color:#000;">OK</span>
<div class="a" style="left:499px;top:443px;width:13px;height:391px;background:linear-gradient(to right,rgba(0,0,0,0.36) 0,rgba(0,0,0,0.216) 22%,rgba(0,0,0,0.108) 48%,rgba(0,0,0,0.036) 75%,rgba(0,0,0,0) 100%);-webkit-mask-image:linear-gradient(to bottom,rgba(0,0,0,0.35) 0,#000 40px);mask-image:linear-gradient(to bottom,rgba(0,0,0,0.35) 0,#000 40px);"></div><div class="a" style="left:499px;top:433px;width:13px;height:10px;background:linear-gradient(to right,rgba(0,0,0,0.36) 0,rgba(0,0,0,0.216) 22%,rgba(0,0,0,0.108) 48%,rgba(0,0,0,0.036) 75%,rgba(0,0,0,0) 100%);opacity:0.25;"></div><div class="a" style="left:84px;top:834px;width:415px;height:9px;background:linear-gradient(to bottom,rgba(0,0,0,0.36) 0,rgba(0,0,0,0.216) 22%,rgba(0,0,0,0.108) 48%,rgba(0,0,0,0.036) 75%,rgba(0,0,0,0) 100%);"></div><div class="a" style="left:78px;top:834px;width:6px;height:9px;background:linear-gradient(to bottom,rgba(0,0,0,0.36) 0,rgba(0,0,0,0.216) 22%,rgba(0,0,0,0.108) 48%,rgba(0,0,0,0.036) 75%,rgba(0,0,0,0) 100%);opacity:0.5;"></div><div class="a" style="left:499px;top:834px;width:13px;height:9px;background:radial-gradient(ellipse 13px 9px at 0 0,rgba(0,0,0,0.36) 0,rgba(0,0,0,0.216) 22%,rgba(0,0,0,0.108) 48%,rgba(0,0,0,0.036) 75%,rgba(0,0,0,0) 100%);"></div>
<div class="dlg" style="left:78px;top:433px;width:421px;height:401px;"><div class="ttl" style="height:25px;"></div></div>
<span class="t" style="left:81.6px;top:440.9px;font-size:11.5px;letter-spacing:-0.13px;color:#000;">Joint classes</span><svg class="a" style="left:477px;top:440px;" width="12" height="12" viewBox="0 0 12 12"><path d="M1 1 L11 11 M11 1 L1 11" stroke="#000" stroke-width="1.1" fill="none"/></svg><span class="t" style="left:96.7px;top:500.0px;font-size:11px;letter-spacing:-0.56px;color:#000;">Class</span><div class="cb g" style="left:159px;top:496px;width:132px;height:20px;"><svg width="9" height="5" viewBox="0 0 9 5"><path d="M0.5 0.4 L4.5 4.4 L8.5 0.4" fill="none" stroke="#444" stroke-width="1.2"/></svg></div><div class="cb g" style="left:366px;top:496px;width:101px;height:20px;"><svg width="9" height="5" viewBox="0 0 9 5"><path d="M0.5 0.4 L4.5 4.4 L8.5 0.4" fill="none" stroke="#444" stroke-width="1.2"/></svg></div><span class="t" style="left:163.1px;top:501.0px;font-size:11px;letter-spacing:-0.28px;color:#000;">5.A</span><span class="t" style="left:369.4px;top:500.8px;font-size:11px;letter-spacing:-0.42px;color:#000;">Boys</span><span class="t" style="left:96.7px;top:529.1px;font-size:11px;letter-spacing:-0.56px;color:#000;">Class</span><div class="cb g" style="left:159px;top:525px;width:132px;height:20px;"><svg width="9" height="5" viewBox="0 0 9 5"><path d="M0.5 0.4 L4.5 4.4 L8.5 0.4" fill="none" stroke="#444" stroke-width="1.2"/></svg></div><div class="cb " style="left:366px;top:525px;width:101px;height:20px;background:#e5f1fb;border-color:#0078d7;"><svg width="9" height="5" viewBox="0 0 9 5"><path d="M0.5 0.4 L4.5 4.4 L8.5 0.4" fill="none" stroke="#444" stroke-width="1.2"/></svg></div><span class="t" style="left:163.1px;top:530.1px;font-size:11px;letter-spacing:-0.28px;color:#000;">5.B</span><span class="t" style="left:369.4px;top:529.9px;font-size:11px;letter-spacing:-0.42px;color:#000;">Boys</span><span class="t" style="left:96.7px;top:559.7px;font-size:11px;letter-spacing:-0.56px;color:#000;">Class</span><div class="cb g" style="left:159px;top:553px;width:132px;height:20px;"><svg width="9" height="5" viewBox="0 0 9 5"><path d="M0.5 0.4 L4.5 4.4 L8.5 0.4" fill="none" stroke="#444" stroke-width="1.2"/></svg></div><div class="cb d" style="left:366px;top:553px;width:101px;height:20px;"><svg width="9" height="5" viewBox="0 0 9 5"><path d="M0.5 0.4 L4.5 4.4 L8.5 0.4" fill="none" stroke="#b4b4b4" stroke-width="1.2"/></svg></div><span class="t" style="left:96.7px;top:587.8px;font-size:11px;letter-spacing:-0.56px;color:#000;">Class</span><div class="cb g" style="left:159px;top:583px;width:132px;height:20px;"><svg width="9" height="5" viewBox="0 0 9 5"><path d="M0.5 0.4 L4.5 4.4 L8.5 0.4" fill="none" stroke="#444" stroke-width="1.2"/></svg></div><div class="cb d" style="left:366px;top:583px;width:101px;height:20px;"><svg width="9" height="5" viewBox="0 0 9 5"><path d="M0.5 0.4 L4.5 4.4 L8.5 0.4" fill="none" stroke="#b4b4b4" stroke-width="1.2"/></svg></div><span class="t" style="left:96.7px;top:614.9px;font-size:11px;letter-spacing:-0.56px;color:#000;">Class</span><div class="cb g" style="left:159px;top:610px;width:132px;height:20px;"><svg width="9" height="5" viewBox="0 0 9 5"><path d="M0.5 0.4 L4.5 4.4 L8.5 0.4" fill="none" stroke="#444" stroke-width="1.2"/></svg></div><div class="cb d" style="left:366px;top:610px;width:101px;height:20px;"><svg width="9" height="5" viewBox="0 0 9 5"><path d="M0.5 0.4 L4.5 4.4 L8.5 0.4" fill="none" stroke="#b4b4b4" stroke-width="1.2"/></svg></div><span class="t" style="left:96.7px;top:644.5px;font-size:11px;letter-spacing:-0.56px;color:#000;">Class</span><div class="cb g" style="left:159px;top:639px;width:132px;height:20px;"><svg width="9" height="5" viewBox="0 0 9 5"><path d="M0.5 0.4 L4.5 4.4 L8.5 0.4" fill="none" stroke="#444" stroke-width="1.2"/></svg></div><div class="cb d" style="left:366px;top:639px;width:101px;height:20px;"><svg width="9" height="5" viewBox="0 0 9 5"><path d="M0.5 0.4 L4.5 4.4 L8.5 0.4" fill="none" stroke="#b4b4b4" stroke-width="1.2"/></svg></div><span class="t" style="left:96.7px;top:675.7px;font-size:11px;letter-spacing:-0.56px;color:#000;">Class</span><div class="cb g" style="left:159px;top:670px;width:132px;height:20px;"><svg width="9" height="5" viewBox="0 0 9 5"><path d="M0.5 0.4 L4.5 4.4 L8.5 0.4" fill="none" stroke="#444" stroke-width="1.2"/></svg></div><div class="cb d" style="left:366px;top:670px;width:101px;height:20px;"><svg width="9" height="5" viewBox="0 0 9 5"><path d="M0.5 0.4 L4.5 4.4 L8.5 0.4" fill="none" stroke="#b4b4b4" stroke-width="1.2"/></svg></div><span class="t" style="left:96.7px;top:703.2px;font-size:11px;letter-spacing:-0.56px;color:#000;">Class</span><div class="cb g" style="left:159px;top:698px;width:132px;height:20px;"><svg width="9" height="5" viewBox="0 0 9 5"><path d="M0.5 0.4 L4.5 4.4 L8.5 0.4" fill="none" stroke="#444" stroke-width="1.2"/></svg></div><div class="cb d" style="left:366px;top:698px;width:101px;height:20px;"><svg width="9" height="5" viewBox="0 0 9 5"><path d="M0.5 0.4 L4.5 4.4 L8.5 0.4" fill="none" stroke="#b4b4b4" stroke-width="1.2"/></svg></div><div class="gb" style="left:97px;top:746px;width:389px;height:34px;"></div><div class="bt " style="left:127px;top:753px;width:99px;height:19px;"></div><span class="t" style="left:158.3px;top:758.0px;font-size:11px;letter-spacing:0.14px;color:#000;">More &gt;</span><div class="bt " style="left:325px;top:800px;width:74px;height:21px;border:2px solid #0078d7;"></div><span class="t" style="left:353.2px;top:805.7px;font-size:11px;letter-spacing:-0.80px;color:#000;">OK</span><div class="bt " style="left:412px;top:800px;width:74px;height:21px;"></div><span class="t" style="left:431.1px;top:805.7px;font-size:11px;letter-spacing:-0.37px;color:#000;">Cancel</span>
<svg class="a" style="left:0;top:0;" width="705" height="880" viewBox="0 0 705 880"><rect x="522.6" y="397.2" width="136.8" height="28.2" rx="2" ry="2" fill="none" stroke="#bb1e2b" stroke-width="3.2"/><path d="M522.4 398 L522.4 424.5" stroke="#bb1e2b" stroke-width="3.8" stroke-linecap="round"/><path d="M153.8 545 L153.6 493 Q153.6 490 157 490" fill="none" stroke="#bb1e2b" stroke-width="3.8" stroke-linecap="round" stroke-linejoin="round"/><path d="M155 490 L467 490.5 Q471 490.5 471 494 L471 543 Q471 547 467 547 L400 547" fill="none" stroke="#bb1e2b" stroke-width="3.2" stroke-linecap="round" stroke-linejoin="round"/><path d="M154 545 Q154 547 158 547 L400 547" fill="none" stroke="#bb1e2b" stroke-width="1.9" stroke-linecap="round"/><path d="M646.8 425 C640 472 608 516 482 523.6 L482 526.8 C613 521 646 474 651.8 425.6 Z" fill="#bb1e2b"/><path d="M508.4 515 L480.6 525.4 L508.6 532" fill="none" stroke="#bb1e2b" stroke-width="3.8" stroke-linecap="round" stroke-linejoin="round"/></svg>
</body></html>
